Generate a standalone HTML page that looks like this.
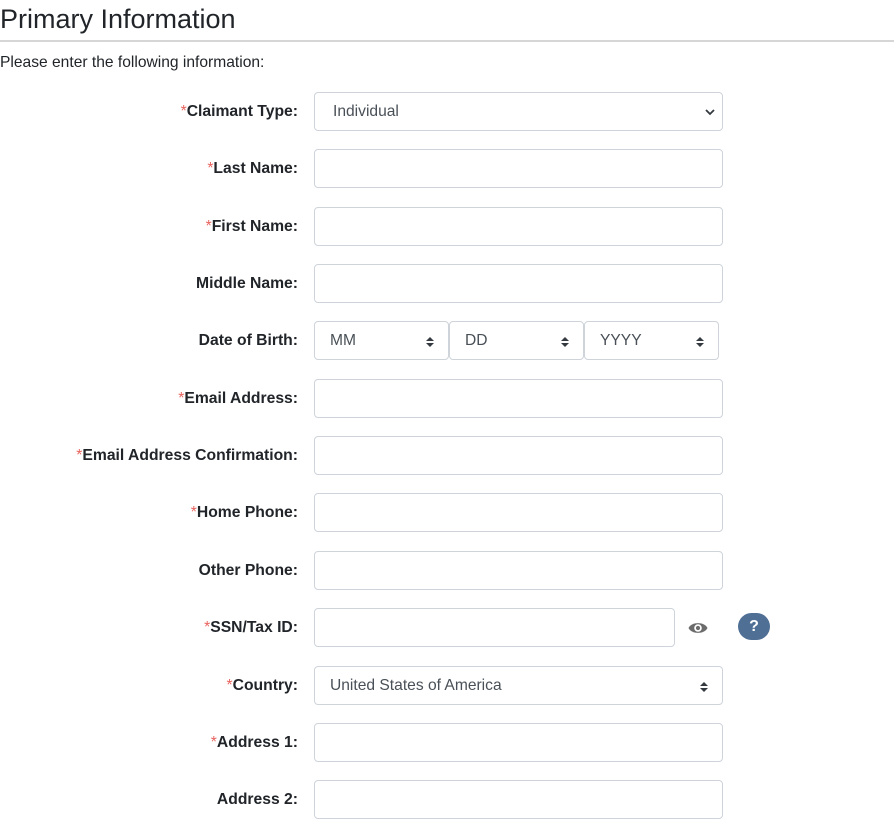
<!DOCTYPE html>
<html><head><meta charset="utf-8"><style>
body{margin:0;width:894px;height:829px;overflow:hidden;background:#fff;font-family:"Liberation Sans",Arial,sans-serif;color:#212529;position:relative}
h1{position:absolute;left:0;top:4px;margin:0;font-weight:400;font-size:27px;color:#212529}
.hr{position:absolute;left:0;top:40px;width:894px;height:2px;background:#d6d6d6}
.intro{position:absolute;left:0;top:54px;font-size:15.6px}
.lbl{position:absolute;right:596px;font-weight:bold;font-size:15.7px;transform:translateY(-50%);white-space:nowrap}
.lbl i{font-style:normal;color:#e8635e;font-weight:normal}
.in{position:absolute;left:314px;width:407px;height:37px;border:1px solid #ced4da;border-radius:4px;box-sizing:content-box;font-size:15.6px;color:#495057;line-height:38px}
.in span{padding-left:15px}
.arr{position:absolute;right:14px;top:14px}
</style></head><body>
<h1>Primary Information</h1>
<div class="hr"></div>
<div class="intro">Please enter the following information:</div>

<div class="lbl" style="top:112px"><i>*</i>Claimant Type:</div>
<div class="in" style="top:92px"><span style="padding-left:18px">Individual</span>
<svg class="arr" style="top:15px;right:7px" width="10" height="8" viewBox="0 0 10 8"><path d="M1 2l4 4 4-4" stroke="#343a40" stroke-width="1.8" fill="none"/></svg></div>

<div class="lbl" style="top:169px"><i>*</i>Last Name:</div>
<div class="in" style="top:149px"></div>
<div class="lbl" style="top:227px"><i>*</i>First Name:</div>
<div class="in" style="top:207px"></div>
<div class="lbl" style="top:284px">Middle Name:</div>
<div class="in" style="top:264px"></div>

<div class="lbl" style="top:341px">Date of Birth:</div>
<div class="in" style="top:321px;width:133px"><span>MM</span><svg class="arr" width="8" height="12" viewBox="0 0 8 12"><path d="M0 5L4 1 8 5ZM0 7l4 4 4-4Z" fill="#343a40"/></svg></div>
<div class="in" style="top:321px;left:449px;width:133px"><span>DD</span><svg class="arr" width="8" height="12" viewBox="0 0 8 12"><path d="M0 5L4 1 8 5ZM0 7l4 4 4-4Z" fill="#343a40"/></svg></div>
<div class="in" style="top:321px;left:584px;width:133px"><span>YYYY</span><svg class="arr" width="8" height="12" viewBox="0 0 8 12"><path d="M0 5L4 1 8 5ZM0 7l4 4 4-4Z" fill="#343a40"/></svg></div>

<div class="lbl" style="top:399px"><i>*</i>Email Address:</div>
<div class="in" style="top:379px"></div>
<div class="lbl" style="top:456px"><i>*</i>Email Address Confirmation:</div>
<div class="in" style="top:436px"></div>
<div class="lbl" style="top:513px"><i>*</i>Home Phone:</div>
<div class="in" style="top:493px"></div>
<div class="lbl" style="top:571px">Other Phone:</div>
<div class="in" style="top:551px"></div>

<div class="lbl" style="top:628px"><i>*</i>SSN/Tax ID:</div>
<div class="in" style="top:608px;width:359px"></div>
<svg style="position:absolute;left:688px;top:621px" width="20" height="14" viewBox="0 0 20 14"><path d="M0.5 7C3.5 0.5 16.5 0.5 19.5 7 16.5 13.5 3.5 13.5 0.5 7Z" fill="#6c6c6c"/><circle cx="10" cy="7" r="3.8" fill="#fff"/><circle cx="10" cy="7" r="2.1" fill="#6c6c6c"/></svg>
<div style="position:absolute;left:738px;top:613px;width:32px;height:27px;border-radius:14px;background:#4f6f95;color:#fff;font-weight:bold;font-size:16px;text-align:center;line-height:27px">?</div>

<div class="lbl" style="top:686px"><i>*</i>Country:</div>
<div class="in" style="top:666px"><span>United States of America</span><svg class="arr" width="8" height="12" viewBox="0 0 8 12"><path d="M0 5L4 1 8 5ZM0 7l4 4 4-4Z" fill="#343a40"/></svg></div>
<div class="lbl" style="top:743px"><i>*</i>Address 1:</div>
<div class="in" style="top:723px"></div>
<div class="lbl" style="top:800px">Address 2:</div>
<div class="in" style="top:780px"></div>
</body></html>
